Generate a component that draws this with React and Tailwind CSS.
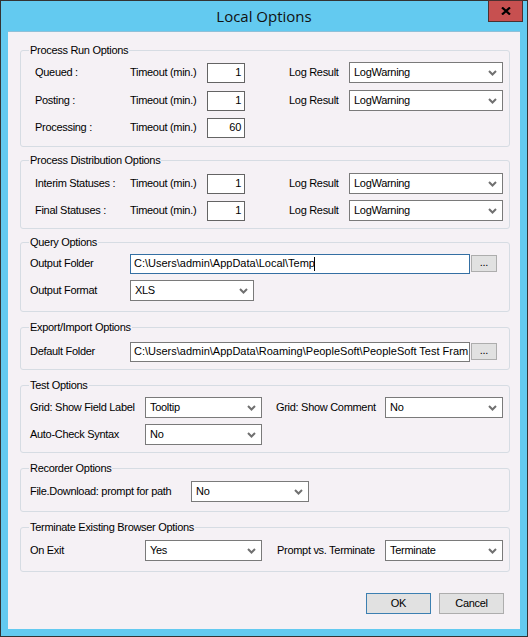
const Chevron = () => (
  <svg width="9" height="6" viewBox="0 0 9 6" className="shrink-0">
    <path d="M1 1l3.5 3.5L8 1" fill="none" stroke="#707070" strokeWidth="2" />
  </svg>
)

const Combo = ({ value, className }) => (
  <div className={`flex h-[21px] shrink-0 items-center justify-between border border-[#7a7a7a] bg-white pl-[4px] pr-[5px] ${className}`}>
    <span>{value}</span>
    <Chevron />
  </div>
)

const NumBox = ({ value }) => (
  <div className="flex h-[20px] w-[38px] shrink-0 items-center justify-end border border-[#646464] bg-white pr-[3px]">
    {value}
  </div>
)

const PathBox = ({ value, focused }) => (
  <>
    <div
      className={`flex h-[20px] w-[340px] shrink-0 items-center whitespace-nowrap border bg-white pl-[3px] tracking-normal ${
        focused ? "border-[#346fa3]" : "border-[#7a7a7a]"
      }`}
    >
      {value}
      {focused && <span className="-ml-[1px] h-[14px] w-[1px] bg-black" />}
    </div>
    <button className="ml-[1px] flex h-[17px] w-[26px] shrink-0 items-center justify-center border border-[#adadad] bg-[#e1e1e1] pb-[3px]">
      ...
    </button>
  </>
)

const Group = ({ title, className, children }) => (
  <fieldset className={`ml-[12px] w-[490px] rounded-[3px] border border-[#d6dce3] ${className}`}>
    <legend className="ml-[8px] px-[1px] leading-[13px]">{title}</legend>
    {children}
  </fieldset>
)

const TimeoutRow = ({ label, value, log, className }) => (
  <div className={`flex h-[21px] items-center ${className}`}>
    <span className="w-[95px] shrink-0">{label}</span>
    <span className="w-[77px] shrink-0">Timeout (min.)</span>
    <NumBox value={value} />
    {log && (
      <>
        <span className="ml-[44px] w-[60px] shrink-0">Log Result</span>
        <Combo value="LogWarning" className="w-[154px]" />
      </>
    )}
  </div>
)

export default function App() {
  return (
    <div className="flex h-[637px] w-[528px] flex-col border border-[#333333] bg-[#63caf0] font-['Liberation_Sans',Arial,sans-serif] text-[11px] leading-[13px] tracking-[-0.3px] text-black">
      {/* title bar */}
      <div className="relative flex h-[30px] shrink-0 items-center justify-center">
        <span className="font-['Open_Sans',sans-serif] text-[15px] leading-[18px] tracking-normal text-[#111]">Local Options</span>
        <div className="absolute right-[4px] top-[-1px] flex h-[22px] w-[35px] items-center justify-center border border-[#4a3030] bg-[#c75050]">
          <svg width="10" height="8" viewBox="0 0 10 8">
            <path d="M1 0.5l8 7M9 0.5l-8 7" stroke="#000" strokeWidth="2.2" />
          </svg>
        </div>
      </div>

      {/* client area */}
      <div className="ml-[7px] flex h-[598px] w-[512px] flex-col border-t border-[#8fc0d8] bg-[#f5f1f5]">
        <Group title="Process Run Options" className="mt-[12px]">
          <div className="pb-[8px] pl-[14px] pt-[5px]">
            <TimeoutRow label="Queued :" value="1" log />
            <TimeoutRow label="Posting :" value="1" log className="mt-[7px]" />
            <TimeoutRow label="Processing :" value="60" className="mt-[6px]" />
          </div>
        </Group>

        <Group title="Process Distribution Options" className="mt-[7px]">
          <div className="pb-[7px] pl-[14px] pt-[6px]">
            <TimeoutRow label="Interim Statuses :" value="1" log />
            <TimeoutRow label="Final Statuses :" value="1" log className="mt-[6px]" />
          </div>
        </Group>

        <Group title="Query Options" className="mt-[7px]">
          <div className="pb-[10px] pl-[9px] pt-[4px]">
            <div className="flex h-[21px] items-center">
              <span className="w-[100px] shrink-0">Output Folder</span>
              <PathBox value="C:\Users\admin\AppData\Local\Temp" focused />
            </div>
            <div className="mt-[6px] flex h-[21px] items-center">
              <span className="w-[100px] shrink-0">Output Format</span>
              <Combo value="XLS" className="w-[124px]" />
            </div>
          </div>
        </Group>

        <Group title="Export/Import Options" className="mt-[9px]">
          <div className="pb-[7px] pl-[9px] pt-[7px]">
            <div className="flex h-[21px] items-center">
              <span className="w-[100px] shrink-0">Default Folder</span>
              <PathBox value="C:\Users\admin\AppData\Roaming\PeopleSoft\PeopleSoft Test Fram" />
            </div>
          </div>
        </Group>

        <Group title="Test Options" className="mt-[9px]">
          <div className="pb-[7px] pl-[9px] pt-[5px]">
            <div className="flex h-[21px] items-center">
              <span className="w-[115px] shrink-0">Grid: Show Field Label</span>
              <Combo value="Tooltip" className="w-[117px]" />
              <span className="ml-[14px] w-[109px] shrink-0">Grid: Show Comment</span>
              <Combo value="No" className="w-[118px]" />
            </div>
            <div className="mt-[6px] flex h-[21px] items-center">
              <span className="w-[115px] shrink-0">Auto-Check Syntax</span>
              <Combo value="No" className="w-[117px]" />
            </div>
          </div>
        </Group>

        <Group title="Recorder Options" className="mt-[9px]">
          <div className="pb-[9px] pl-[9px] pt-[6px]">
            <div className="flex h-[21px] items-center">
              <span className="w-[161px] shrink-0">File.Download: prompt for path</span>
              <Combo value="No" className="w-[118px]" />
            </div>
          </div>
        </Group>

        <Group title="Terminate Existing Browser Options" className="mt-[9px]">
          <div className="pb-[10px] pl-[9px] pt-[6px]">
            <div className="flex h-[21px] items-center">
              <span className="w-[115px] shrink-0">On Exit</span>
              <Combo value="Yes" className="w-[117px]" />
              <span className="ml-[15px] w-[108px] shrink-0">Prompt vs. Terminate</span>
              <Combo value="Terminate" className="w-[118px]" />
            </div>
          </div>
        </Group>

        <div className="mt-[21px] flex justify-end gap-[8px] pr-[16px]">
          <button className="h-[21px] w-[65px] border border-[#3c7fb1] bg-[#e1e1e1]">OK</button>
          <button className="h-[21px] w-[65px] border border-[#adadad] bg-[#e1e1e1]">Cancel</button>
        </div>
      </div>
    </div>
  )
}
